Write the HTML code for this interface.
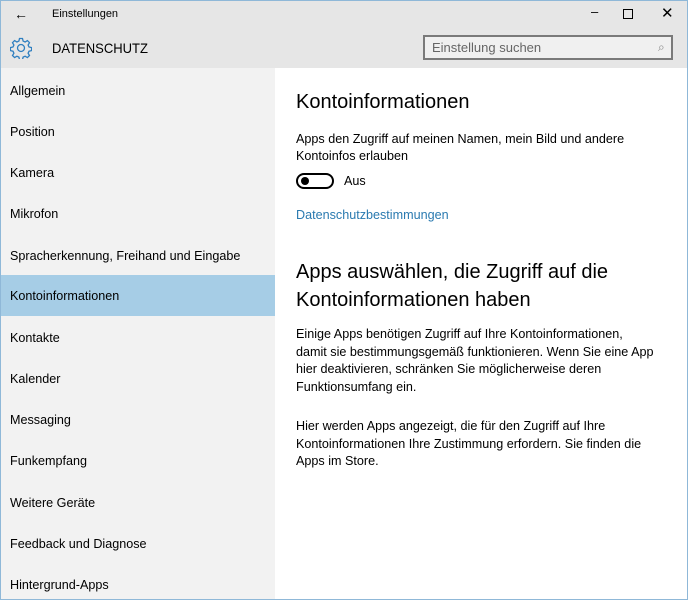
<!DOCTYPE html><html><head><style>
body{margin:0;width:688px;height:600px;overflow:hidden;font-family:"Liberation Sans",sans-serif;background:#fff;position:relative}
.frame{position:absolute;inset:0;border:1px solid #8fb8d8;box-sizing:border-box;pointer-events:none;z-index:5}
.top{position:absolute;left:0;top:0;width:688px;height:68px;background:#e6e6e6}
.t{position:absolute;font-size:11px;color:#000}
.left{position:absolute;left:0;top:68px;width:275px;height:532px;background:#f2f2f2}
.item{position:absolute;left:0;width:275px;height:41px;line-height:41px;padding-left:10px;padding-top:2px;box-sizing:border-box;font-size:12.6px;color:#000}
.sel{background:#a6cde6;line-height:43px;padding-top:0}
.c{position:absolute;left:296px;color:#000;white-space:nowrap}
</style></head><body>
<div class="top">
<div class="t" style="left:14px;top:6px;font-size:14px">←</div>
<div class="t" style="left:52px;top:8px">Einstellungen</div>
<div class="t" style="left:591px;top:4px;font-size:13px">–</div>
<div style="position:absolute;left:623px;top:9px;width:8px;height:8px;border:1px solid #000"></div>
<div class="t" style="left:661px;top:4px;font-size:15px">✕</div>
<svg style="position:absolute;left:10px;top:37px" width="22" height="22" viewBox="0 0 22 22"><g fill="none" stroke="#2f7fc0" stroke-width="1.3"><circle cx="11" cy="11" r="3.5"/><path d="M9.5 1.5h3l.6 2.6 2 .9 2.3-1.4 2.1 2.1-1.4 2.3.9 2 2.6.6v3l-2.6.6-.9 2 1.4 2.3-2.1 2.1-2.3-1.4-2 .9-.6 2.6h-3l-.6-2.6-2-.9-2.3 1.4-2.1-2.1 1.4-2.3-.9-2-2.6-.6v-3l2.6-.6.9-2-1.4-2.3 2.1-2.1 2.3 1.4 2-.9z"/></g></svg>
<div class="t" style="left:52px;top:40px;font-size:14px;transform:scaleX(0.93);transform-origin:left">DATENSCHUTZ</div>
<div style="position:absolute;left:423px;top:35px;width:250px;height:25px;border:2px solid #7a7a7a;box-sizing:border-box;background:#f0f0f0"></div>
<div class="t" style="left:432px;top:40px;font-size:13px;color:#666">Einstellung suchen</div>
<div class="t" style="left:658px;top:40px;font-size:12px;color:#888">⌕</div>
</div>
<div class="left">
<div class="item" style="top:1px">Allgemein</div>
<div class="item" style="top:42px">Position</div>
<div class="item" style="top:83px">Kamera</div>
<div class="item" style="top:124px">Mikrofon</div>
<div class="item" style="top:166px">Spracherkennung, Freihand und Eingabe</div>
<div class="item sel" style="top:207px">Kontoinformationen</div>
<div class="item" style="top:248px">Kontakte</div>
<div class="item" style="top:289px">Kalender</div>
<div class="item" style="top:330px">Messaging</div>
<div class="item" style="top:371px">Funkempfang</div>
<div class="item" style="top:413px">Weitere Geräte</div>
<div class="item" style="top:454px">Feedback und Diagnose</div>
<div class="item" style="top:495px">Hintergrund-Apps</div>
</div>
<div class="c" style="top:91px;font-size:20px">Kontoinformationen</div>
<div class="c" style="top:131px;font-size:12.6px;line-height:17px">Apps den Zugriff auf meinen Namen, mein Bild und andere<br>Kontoinfos erlauben</div>
<div style="position:absolute;left:296px;top:173px;width:38px;height:16px;border:2px solid #000;border-radius:10px;box-sizing:border-box"></div>
<div style="position:absolute;left:301px;top:177px;width:8px;height:8px;background:#000;border-radius:50%"></div>
<div class="c" style="left:344px;top:174px;font-size:12.6px">Aus</div>
<div class="c" style="top:208px;font-size:12.6px;color:#2a7ab0">Datenschutzbestimmungen</div>
<div class="c" style="top:258px;font-size:20px;line-height:28px">Apps auswählen, die Zugriff auf die<br>Kontoinformationen haben</div>
<div class="c" style="top:326px;font-size:12.6px;line-height:17.5px">Einige Apps benötigen Zugriff auf Ihre Kontoinformationen,<br>damit sie bestimmungsgemäß funktionieren. Wenn Sie eine App<br>hier deaktivieren, schränken Sie möglicherweise deren<br>Funktionsumfang ein.</div>
<div class="c" style="top:418px;font-size:12.6px;line-height:17.5px">Hier werden Apps angezeigt, die für den Zugriff auf Ihre<br>Kontoinformationen Ihre Zustimmung erfordern. Sie finden die<br>Apps im Store.</div>
<div class="frame"></div>
</body></html>
